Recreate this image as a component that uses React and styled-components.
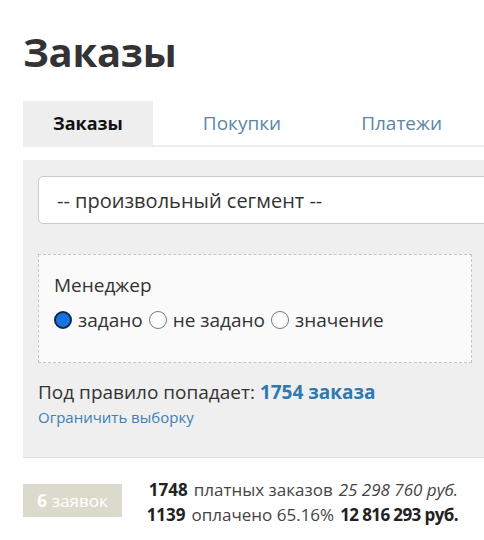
import React from 'react'
import styled, { createGlobalStyle } from 'styled-components'

const GlobalStyle = createGlobalStyle`
  html, body {
    margin: 0;
    padding: 0;
    background: #fff;
    overflow: hidden;
  }
  body {
    font-family: "Open Sans", "Noto Sans", sans-serif;
    color: #333;
  }
`

const Page = styled.div`
  width: 520px;
  padding: 0 0 0 23px;
`

const Title = styled.h1`
  margin: 0;
  padding-top: 28px;
  height: 101px;
  box-sizing: border-box;
  font-size: 40px;
  line-height: 48px;
  font-weight: 700;
  color: #333;
  letter-spacing: -0.3px;
`

const Tabs = styled.div`
  display: flex;
  gap: 20px;
  height: 44px;
  border-bottom: 2px solid #eee;
`

const Tab = styled.div`
  display: flex;
  align-items: center;
  padding: 0 30px;
  font-size: ${p => (p.$active ? '18px' : '19px')};
  font-weight: ${p => (p.$active ? 700 : 400)};
  color: ${p => (p.$active ? '#111' : '#5d86a6')};
  background: ${p => (p.$active ? '#eee' : 'transparent')};
`

const Panel = styled.div`
  margin-top: 13px;
  background: #efefef;
  border-bottom: 1px solid #e0e0e0;
  padding: 16px 0 0 15px;
  height: 298px;
  box-sizing: border-box;
`

const Select = styled.div`
  height: 48px;
  box-sizing: border-box;
  border: 1px solid #ccc;
  border-radius: 5px;
  background: #fff;
  display: flex;
  align-items: center;
  padding-left: 18px;
  font-size: 20px;
  color: #333;
`

const Rule = styled.div`
  margin-top: 30px;
  width: 434px;
  height: 109px;
  box-sizing: border-box;
  border: 1px dashed #c4c4c4;
  background: #fafafa;
  padding: 17px 0 0 15px;
`

const RuleLabel = styled.div`
  font-size: 19px;
  line-height: 26px;
  color: #333;
`

const RadioRow = styled.div`
  display: flex;
  align-items: center;
  margin-top: 9px;
  font-size: 19px;
  line-height: 26px;
  color: #333;
`

const RadioOption = styled.label`
  display: flex;
  align-items: center;
  gap: 6px;
  margin-right: 6px;
`

const RadioDot = styled.span`
  width: 18px;
  height: 18px;
  box-sizing: border-box;
  border-radius: 50%;
  border: ${p => (p.$checked ? '2px solid #0b2a4a' : '1px solid #777')};
  background: ${p => (p.$checked ? '#1a72e0' : '#fff')};
`

const Count = styled.div`
  margin-top: 16px;
  font-size: 19px;
  line-height: 26px;
  color: #333;
`

const Strong = styled.b`
  color: #2f78b0;
  font-weight: 700;
`

const Link = styled.a`
  display: block;
  margin-top: 2px;
  font-size: 15px;
  line-height: 20px;
  color: #3d7fb4;
  text-decoration: none;
`

const Summary = styled.div`
  display: flex;
  align-items: flex-start;
  margin-top: 19px;
  width: 435px;
`

const Badge = styled.div`
  margin-top: 7px;
  width: 99px;
  height: 33px;
  background: #dadbcc;
  color: #fff;
  font-size: 17px;
  display: flex;
  align-items: center;
  justify-content: center;
  gap: 5px;
  b { font-weight: 700; }
`

const Stats = styled.div`
  flex: 1;
  text-align: right;
  font-size: 17px;
  line-height: 25px;
  color: #444;
  white-space: nowrap;
`

const Num = styled.b`
  color: #222;
  font-weight: 700;
  margin-right: 6px;
`

const Amount = styled.span`
  margin-left: 6px;
  font-style: ${p => (p.$italic ? 'italic' : 'normal')};
  font-weight: ${p => (p.$bold ? 700 : 400)};
  color: ${p => (p.$bold ? '#222' : '#444')};
  letter-spacing: ${p => (p.$bold ? '-0.6px' : '0')};
`

export default function App() {
  return (
    <Page>
      <GlobalStyle />
      <Title>Заказы</Title>
      <Tabs>
        <Tab $active>Заказы</Tab>
        <Tab>Покупки</Tab>
        <Tab>Платежи</Tab>
      </Tabs>
      <Panel>
        <Select>-- произвольный сегмент --</Select>
        <Rule>
          <RuleLabel>Менеджер</RuleLabel>
          <RadioRow>
            <RadioOption><RadioDot $checked />задано</RadioOption>
            <RadioOption><RadioDot />не задано</RadioOption>
            <RadioOption><RadioDot />значение</RadioOption>
          </RadioRow>
        </Rule>
        <Count>Под правило попадает: <Strong>1754 заказа</Strong></Count>
        <Link href="#">Ограничить выборку</Link>
      </Panel>
      <Summary>
        <Badge><b>6</b>заявок</Badge>
        <Stats>
          <div><Num>1748</Num>платных заказов<Amount $italic>25 298 760 руб.</Amount></div>
          <div><Num>1139</Num>оплачено 65.16%<Amount $bold>12 816 293 руб.</Amount></div>
        </Stats>
      </Summary>
    </Page>
  )
}
